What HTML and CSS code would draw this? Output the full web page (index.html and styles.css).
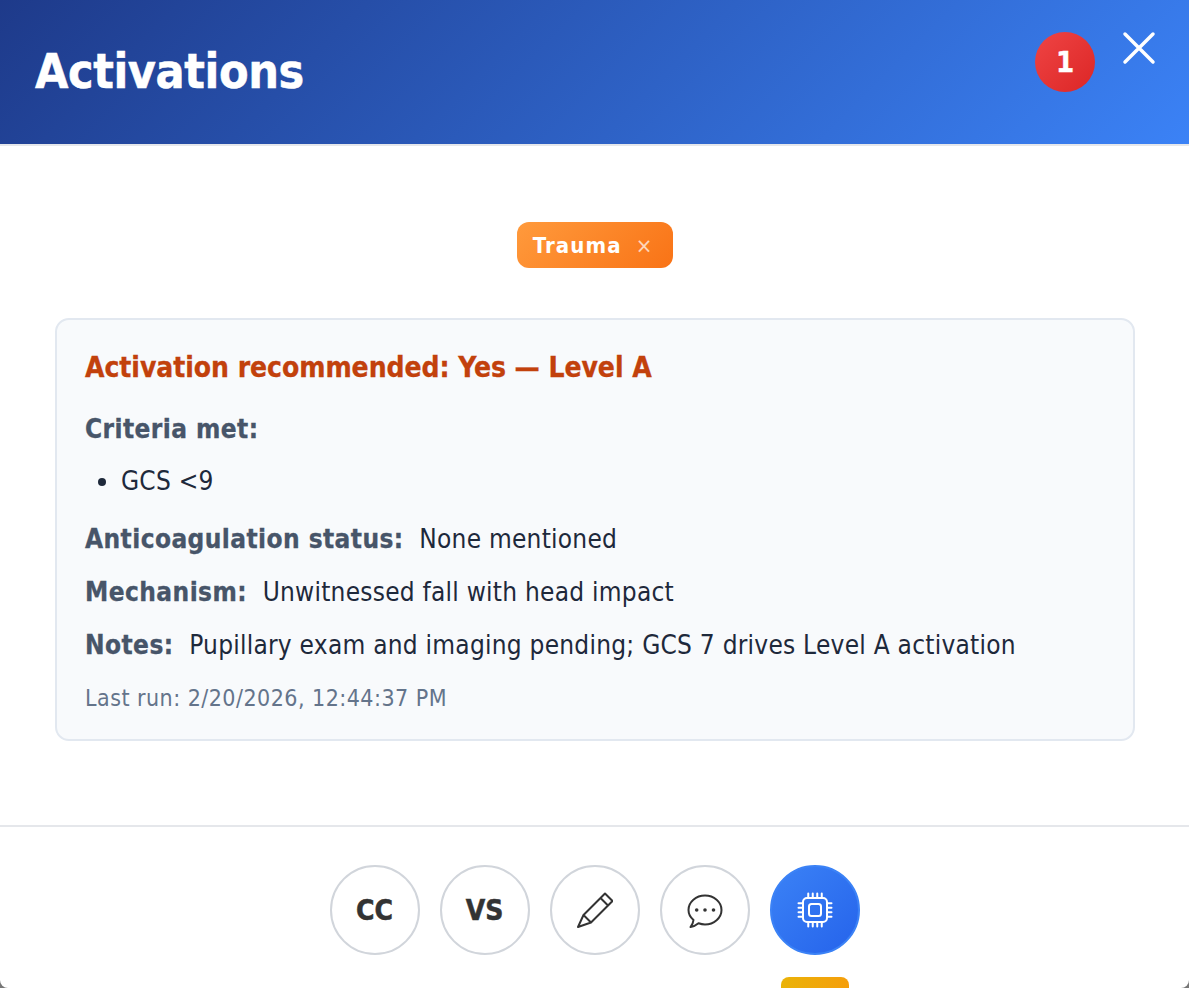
FILE: index.html
```html
<!DOCTYPE html>
<html lang="en">
<head>
  <meta charset="UTF-8" />
  <title>Activations</title>
  <link rel="stylesheet" href="styles.css">
</head>
<body>
<div class="modal">
  <header class="modal-header">
    <h1>Activations</h1>
    <span class="count">1</span>
    <button class="close" aria-label="Close">
      <svg viewBox="0 0 34 34"><path d="M3 3L31 31M31 3L3 31" /></svg>
    </button>
  </header>
  <main class="content">
    <div class="tags">
      <span class="tag">Trauma <span class="tag-x">×</span></span>
    </div>
    <section class="card">
      <p class="headline">Activation recommended: Yes — Level A</p>
      <p class="label-line"><b>Criteria met:</b></p>
      <ul>
        <li>GCS &lt;9</li>
      </ul>
      <p class="line"><b>Anticoagulation status:</b> None mentioned</p>
      <p class="line"><b>Mechanism:</b> Unwitnessed fall with head impact</p>
      <p class="line"><b>Notes:</b> Pupillary exam and imaging pending; GCS 7 drives Level A activation</p>
      <p class="last-run">Last run: 2/20/2026, 12:44:37 PM</p>
    </section>
  </main>
  <footer class="toolbar">
    <button class="tool">CC</button>
    <button class="tool">VS</button>
    <button class="tool" aria-label="Edit">
      <svg class="line-icon" width="36" height="36" viewBox="0 0 36 36">
        <path d="M1 35L6.500 23L28 1.500L35.500 9L14 30.500ZM6.500 23L14 30.500M23.500 6L31 13.500" />
      </svg>
    </button>
    <button class="tool" aria-label="Chat">
      <svg class="line-icon" width="36" height="36" viewBox="0 0 36 36">
        <path d="M6.500 28C3 25 1.500 21.500 1.500 18C1.500 10 9 3.500 18 3.500S34.500 10 34.500 18S27 32.500 18 32.500C15.500 32.500 13.500 32 11.500 31.300C9.500 33 6.500 34.500 3.500 35C5 33 6.300 30.500 6.500 28Z" />
        <circle class="dot" cx="9.700" cy="18" r="1.800" />
        <circle class="dot" cx="18" cy="18" r="1.800" />
        <circle class="dot" cx="26.500" cy="18" r="1.800" />
      </svg>
    </button>
    <button class="tool active" aria-label="Processor">
      <svg class="line-icon" width="36" height="36" viewBox="0 0 36 36">
        <rect x="6" y="6" width="24" height="24" rx="4" />
        <rect x="12" y="12" width="12" height="12" rx="2.500" />
        <path d="M11.250 1.500V6M15.750 1.500V6M20.250 1.500V6M24.750 1.500V6M11.250 30V34.500M15.750 30V34.500M20.250 30V34.500M24.750 30V34.500M1.500 11.250H6M1.500 15.750H6M1.500 20.250H6M1.500 24.750H6M30 11.250H34.500M30 15.750H34.500M30 20.250H34.500M30 24.750H34.500" />
      </svg>
    </button>
    <span class="peek"></span>
  </footer>
</div>
</body>
</html>
```

FILE: styles.css
```css
html,
body {
  height: 100%;
}
body {
  margin: 0;
  background-color: #777;
  font-family: "DejaVu Sans Condensed", "DejaVu Sans", sans-serif;
  color: #1e293b;
  overflow: hidden;
}
p {
  margin: 0;
}

.modal {
  height: 988px;
  display: flex;
  flex-direction: column;
  background-color: #fff;
  border-radius: 0 0 8px 8px;
  overflow: hidden;
}

.modal-header {
  height: 144px;
  flex: none;
  display: flex;
  align-items: center;
  padding: 0 33px 0 35px;
  background: linear-gradient(135deg, #1e3a8a, #3b82f6);
  border-bottom: 2px solid #e5e7eb;
  color: #fff;
}
.modal-header h1 {
  flex: 1;
  margin: 0 0 2px;
  font-size: 48px;
  font-weight: 700;
  letter-spacing: -0.4px;
  -webkit-text-stroke: 0.5px #fff;
}
.count {
  width: 60px;
  height: 60px;
  margin: -20px 27px 0 0;
  display: flex;
  align-items: center;
  justify-content: center;
  border-radius: 50%;
  background: linear-gradient(135deg, #ef4444, #dc2626);
  font-size: 29px;
  font-weight: 700;
  -webkit-text-stroke: 0.4px #fff;
}
.close {
  margin: -48px 0 0 0;
  padding: 0;
  width: 34px;
  height: 34px;
  border: 0;
  background: none;
}
.close svg {
  display: block;
  width: 34px;
  height: 34px;
}
.close path {
  stroke: #fff;
  stroke-width: 3.5;
  stroke-linecap: round;
  fill: none;
}

.content {
  flex: 1;
  padding: 76px 54px 0 55px;
}
.tags {
  display: flex;
  justify-content: center;
  margin-bottom: 50px;
}
.tag {
  height: 46px;
  padding: 0 21px 0 16px;
  display: flex;
  align-items: center;
  gap: 14px;
  border-radius: 12px;
  background: linear-gradient(135deg, #ff9a3c, #f97316);
  color: #fff;
  font-size: 22px;
  font-weight: 700;
  letter-spacing: 1.1px;
}
.tag-x {
  font-weight: 400;
  font-size: 22px;
  letter-spacing: 0;
  opacity: 0.7;
}

.card {
  height: 423px;
  box-sizing: border-box;
  padding: 28px 28px 0;
  background-color: #f8fafc;
  border: 2px solid #e2e8f0;
  border-radius: 14px;
  font-size: 26px;
  letter-spacing: 0.24px;
}
.headline {
  color: #c2410c;
  font-size: 28px;
  font-weight: 700;
  letter-spacing: -0.05px;
  line-height: 38px;
  margin-bottom: 23px;
  position: relative;
  top: 1px;
  -webkit-text-stroke: 0.3px #c2410c;
}
.label-line,
.line {
  line-height: 38px;
  position: relative;
  top: 1px;
}
.line {
  margin-bottom: 15px;
}
.card b {
  color: #475569;
  margin-right: 8px;
  letter-spacing: 0.42px;
  -webkit-text-stroke: 0.3px #475569;
}
.card ul {
  margin: 15px 0 19px;
  padding-left: 36px;
  line-height: 38px;
}
.last-run {
  margin-top: 20px;
  font-size: 23px;
  letter-spacing: 0.47px;
  line-height: 30px;
  color: #64748b;
}

.toolbar {
  position: relative;
  flex: none;
  height: 163px;
  box-sizing: border-box;
  padding-top: 38px;
  display: flex;
  justify-content: center;
  align-items: flex-start;
  gap: 20px;
  border-top: 2px solid #e5e7eb;
}
.tool {
  width: 90px;
  height: 90px;
  padding: 0;
  display: flex;
  align-items: center;
  justify-content: center;
  background-color: #fff;
  border: 2px solid #d1d5db;
  border-radius: 50%;
  color: #333;
  font-family: inherit;
  font-size: 28px;
  font-weight: 700;
  -webkit-text-stroke: 0.5px #333;
}
.tool.active {
  background: linear-gradient(135deg, #3b82f6, #2563eb);
  border-color: #3b82f6;
}
.line-icon {
  fill: none;
  stroke: #333;
  stroke-width: 2;
  stroke-linejoin: round;
  stroke-linecap: round;
}
.line-icon .dot {
  fill: #333;
  stroke: none;
}
.active .line-icon {
  stroke: #fff;
}
.peek {
  position: absolute;
  left: 781px;
  top: 150px;
  width: 68px;
  height: 20px;
  border-radius: 8px 8px 0 0;
  background: linear-gradient(90deg, #eab308, #f59e0b);
}
```
